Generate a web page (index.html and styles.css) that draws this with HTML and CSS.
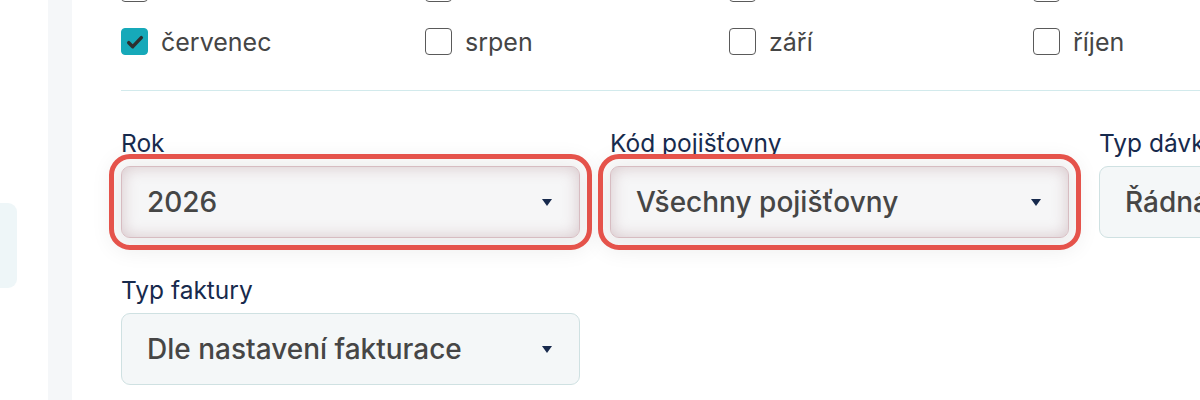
FILE: index.html
```html
<!DOCTYPE html>
<html lang="cs">
<head>
<meta charset="utf-8">
<title>Filtr</title>
<link rel="stylesheet" href="styles.css">
</head>
<body>
<div class="page">
  <div class="side">
    <div class="side-tab"></div>
  </div>
  <div class="rail"></div>
  <main class="content">
    <div class="months">
      <span class="month"><span class="box"></span></span>
      <span class="month"><span class="box"></span></span>
      <span class="month"><span class="box"></span></span>
      <span class="month"><span class="box"></span></span>
      <label class="month"><span class="box checked"><svg viewBox="0 0 24 24" width="20" height="20"><path d="M4.5 12.8l4.8 4.8L19.6 6.8" fill="none" stroke="#2e2e2e" stroke-width="4.2" stroke-linecap="round" stroke-linejoin="round"/></svg></span><span class="mname">červenec</span></label>
      <label class="month"><span class="box"></span><span class="mname">srpen</span></label>
      <label class="month"><span class="box"></span><span class="mname">září</span></label>
      <label class="month"><span class="box"></span><span class="mname">říjen</span></label>
    </div>
    <hr class="divider">
    <div class="fields">
      <div class="field">
        <div class="flabel">Rok</div>
        <div class="select error"><span class="value">2026</span><span class="caret"></span></div>
      </div>
      <div class="field">
        <div class="flabel">Kód pojišťovny</div>
        <div class="select error"><span class="value">Všechny pojišťovny</span><span class="caret"></span></div>
      </div>
      <div class="field">
        <div class="flabel">Typ dávky</div>
        <div class="select"><span class="value">Řádná dávka</span><span class="caret"></span></div>
      </div>
      <div class="field">
        <div class="flabel">Typ faktury</div>
        <div class="select"><span class="value">Dle nastavení fakturace</span><span class="caret"></span></div>
      </div>
    </div>
  </main>
</div>
</body>
</html>
```
FILE: styles.css
```css
html, body {
  margin: 0;
  padding: 0;
  background: #ffffff;
}
body {
  width: 1200px;
  height: 400px;
  overflow: hidden;
  font-family: Inter, "Noto Sans", "DejaVu Sans", sans-serif;
}
.page {
  display: flex;
  height: 400px;
}
.side {
  width: 48px;
  flex: none;
  padding-top: 203px;
  box-sizing: border-box;
}
.side-tab {
  width: 17px;
  height: 85px;
  background: #eef6f8;
  border-radius: 0 9px 9px 0;
}
.rail {
  width: 24px;
  flex: none;
  background: #f5f7f9;
}
.content {
  flex: 1;
  min-width: 0;
  padding-left: 49px;
  overflow: hidden;
}
.months {
  display: grid;
  grid-template-columns: repeat(4, 304px);
  row-gap: 26px;
  margin-top: -25px;
}
.month {
  display: flex;
  align-items: center;
  gap: 13px;
  height: 27px;
  font-size: 25px;
  color: #454545;
  white-space: nowrap;
}
.box {
  width: 27px;
  height: 27px;
  box-sizing: border-box;
  border: 1.5px solid #5a5a5a;
  border-radius: 4px;
  flex: none;
  display: flex;
  align-items: center;
  justify-content: center;
}
.box.checked {
  background: #16a9b9;
  border-color: #16a9b9;
}
.divider {
  border: 0;
  border-top: 1px solid #d2eaec;
  margin: 35px 0 0 0;
}
.fields {
  display: grid;
  grid-template-columns: repeat(3, 459px);
  column-gap: 30px;
  row-gap: 37px;
  margin-top: 37px;
}
.flabel {
  font-size: 24.5px;
  line-height: 30px;
  color: #172a4d;
  margin-bottom: 8px;
  white-space: nowrap;
}
.select {
  height: 72px;
  box-sizing: border-box;
  border: 1px solid #cfe1e2;
  border-radius: 9px;
  background: #f4f7f8;
  display: flex;
  align-items: center;
  padding: 0 27px 0 25px;
  gap: 12px;
}
.select.error {
  border-color: #d7bcc1;
  background: #f6f6f7;
  box-shadow: inset 0 0 16px rgba(150, 95, 105, 0.32), 0 3px 22px 10px rgba(0, 0, 0, 0.07);
  outline: 5px solid #e5534b;
  outline-offset: 7px;
}
.value {
  flex: 1;
  font-size: 28px;
  font-weight: 500;
  color: #464646;
  white-space: nowrap;
  overflow: hidden;
}
.caret {
  width: 0;
  height: 0;
  border-left: 5.5px solid transparent;
  border-right: 5.5px solid transparent;
  border-top: 7px solid #172a4d;
  flex: none;
}
```
